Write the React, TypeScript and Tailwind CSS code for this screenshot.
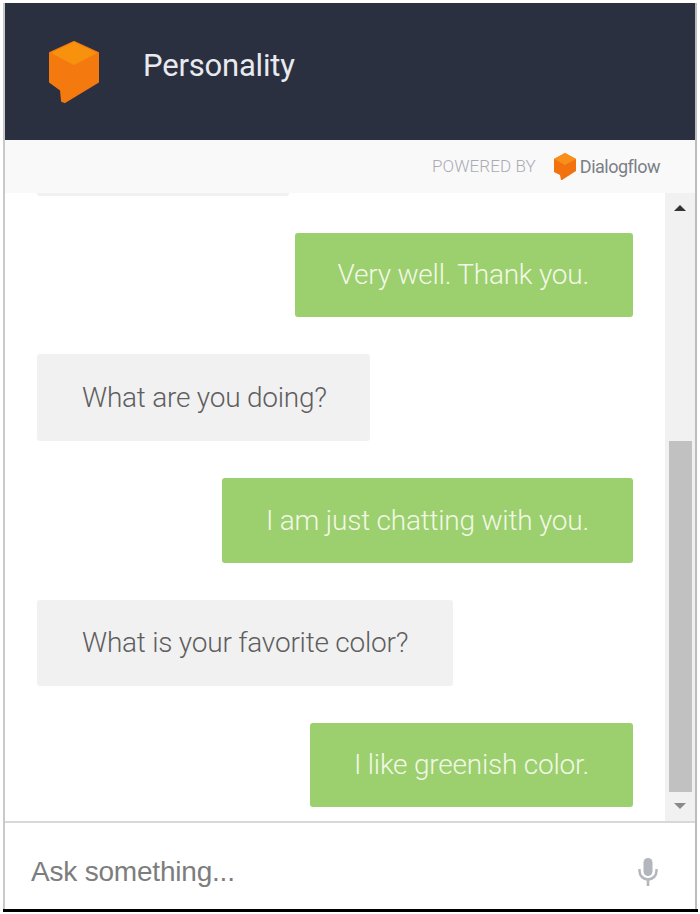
export default function App() {
  return (
    <div className="h-[914px] w-[700px] bg-white pt-[3px] font-['Roboto',sans-serif]">
      <div className="ml-[3px] flex h-[906px] w-[694px] flex-col border-x-2 border-[#c9c9c9] border-r-[#bdbdbd]">
        <header className="flex h-[137px] shrink-0 items-center bg-[#2b3040] pl-[44px]">
          <svg width="50" height="62" viewBox="0 0 50 62" className="shrink-0">
            <path d="M25 1 L49 12 L49 41 L16 61 L13 60 L12 49 L1 41 L1 12 Z" fill="#f47a10" stroke="#f47a10" strokeWidth="2" strokeLinejoin="round" />
            <path d="M25 1 L48 12 L25 24 L2 12 Z" fill="#f8920e" />
          </svg>
          <h1 className="mb-[12px] ml-[44px] text-[31px] font-normal leading-none tracking-[-0.2px] text-[#e8eaf0]">Personality</h1>
        </header>
        <div className="flex h-[53px] shrink-0 items-center justify-end bg-[#f9f9f9] pr-[35px]">
          <span className="text-[17px] font-light tracking-[0.1px] text-[#a9acb4]">POWERED BY</span>
          <svg width="24" height="28" viewBox="0 0 24 28" className="ml-[17px] shrink-0">
            <path d="M12 0 L23 6 L23 18 L9 27 L8 27 L7 22 L1 19 L1 6 Z" fill="#f2720f" />
            <path d="M12 0 L23 6 L12 12 L1 6 Z" fill="#f98f1a" />
          </svg>
          <span className="ml-[3px] text-[18px] font-normal tracking-[-0.5px] text-[#7b7f87]">Dialogflow</span>
        </div>
        <main className="relative flex min-h-0 flex-1 overflow-hidden">
          <div className="flex flex-1 flex-col pl-[32px] pr-[32px]">
            <div className="h-[3px] w-[252px] rounded-b bg-[#f1f1f1]" />
            <div className="mt-[37px] flex flex-col gap-[37px]">
              <Bubble me className="h-[84px] w-[338px]">Very well. Thank you.</Bubble>
              <Bubble className="h-[87px] w-[333px]">What are you doing?</Bubble>
              <Bubble me className="h-[85px] w-[411px]">I am just chatting with you.</Bubble>
              <Bubble className="h-[86px] w-[416px]">What is your favorite color?</Bubble>
              <Bubble me className="h-[84px] w-[323px]">I like greenish color.</Bubble>
            </div>
          </div>
          <div className="flex w-[30px] shrink-0 flex-col bg-[#f1f1f1]">
            <div className="flex h-[26px] items-center justify-center pt-[3px]">
              <div className="h-0 w-0 border-x-[6px] border-b-[6px] border-x-transparent border-b-[#333]" />
            </div>
            <div className="flex-1 pt-[222px]">
              <div className="ml-[4px] h-[351px] w-[23px] bg-[#c1c1c1]" />
            </div>
            <div className="flex h-[28px] items-center justify-center pb-[2px]">
              <div className="h-0 w-0 border-x-[6px] border-t-[6px] border-x-transparent border-t-[#8a8a8a]" />
            </div>
          </div>
        </main>
        <footer className="flex h-[88px] shrink-0 items-center justify-between border-t-2 border-[#d8d8d8] pl-[26px] pr-[37px] pt-[11px]">
          <span className="font-['Liberation_Sans',sans-serif] text-[28px] tracking-[-0.2px] text-[#7d7d7d]">Ask something...</span>
          <svg width="20" height="28" viewBox="0 0 20 28" className="shrink-0">
            <rect x="5.5" y="0" width="9" height="18" rx="4.5" fill="#b3b6bc" />
            <path d="M1.5 11 V13 A8.5 8.5 0 0 0 18.5 13 V11" fill="none" stroke="#b3b6bc" strokeWidth="2.5" />
            <rect x="8.7" y="21" width="2.6" height="7" fill="#b3b6bc" />
          </svg>
        </footer>
      </div>
      <div className="ml-[3px] h-[3px] w-[695px] bg-black" />
    </div>
  );
}

function Bubble({ me, className, children }: { me?: boolean; className: string; children: string }) {
  const tone = me
    ? "self-end justify-end bg-[#9ccf6e] pr-[44px] text-[#f2f8e6]"
    : "self-start justify-start bg-[#f1f1f1] pl-[45px] text-[#5e5e60]";
  return (
    <div className={`flex shrink-0 items-center rounded-[3px] text-[28px] font-light tracking-[-0.22px] ${tone} ${className}`}>
      {children}
    </div>
  );
}
